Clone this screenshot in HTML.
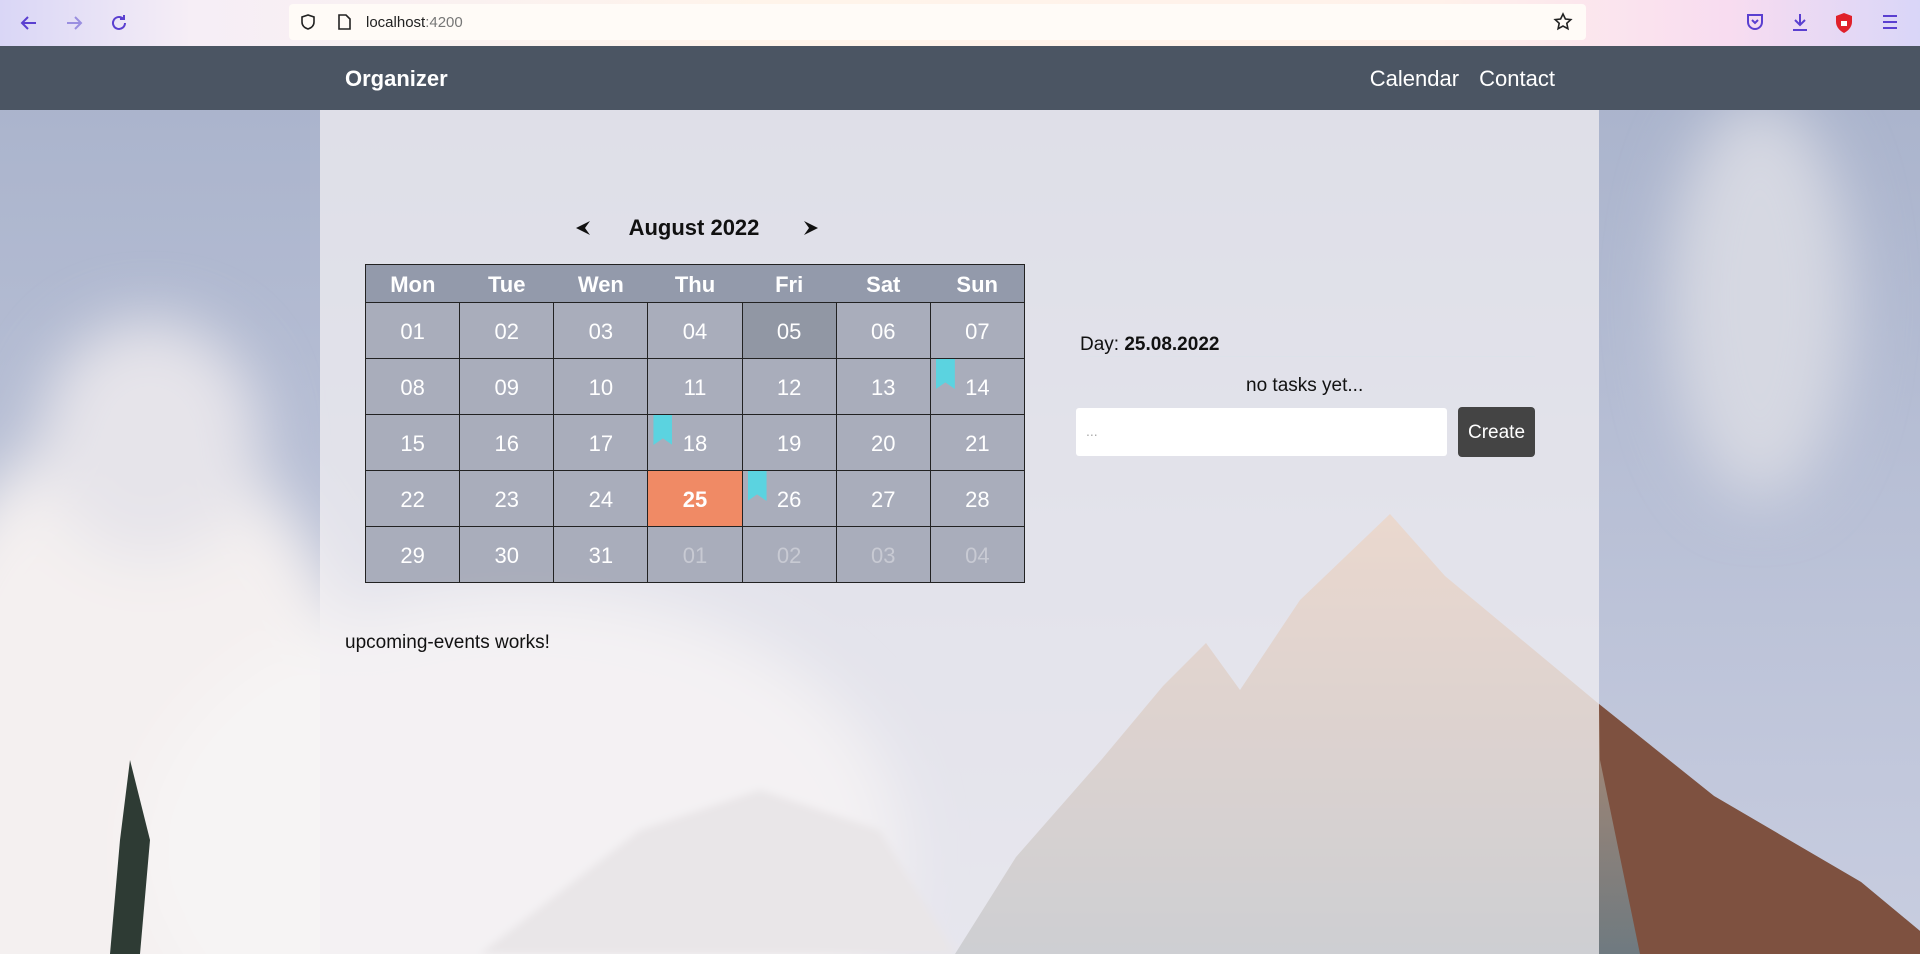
<!DOCTYPE html>
<html><head><meta charset="utf-8"><style>
*{margin:0;padding:0;box-sizing:border-box}
html,body{width:1920px;height:954px;overflow:hidden}
body{font-family:"Liberation Sans",sans-serif;position:relative;background:#b4bdd2}
#bg{position:absolute;left:0;top:0}
.chrome{position:absolute;left:0;top:0;width:1920px;height:46px;background:linear-gradient(90deg,#d9d6f6 0%,#f6eef6 10%,#fff4ea 40%,#fff1ea 75%,#f8dcf0 90%,#d9d6f8 100%);overflow:hidden}
.url{position:absolute;left:289px;top:4px;width:1297px;height:36px;background:#fffbf7;border-radius:4px}
.url span{position:absolute;left:77px;top:10px;font-size:15px;color:#222}
.url span i{font-style:normal;color:#777}
.nav{position:absolute;left:0;top:46px;width:1920px;height:64px;background:#4b5563}
.nav .brand{position:absolute;left:345px;top:20px;color:#fff;font-weight:bold;font-size:22px}
.nav .links{position:absolute;right:365px;top:20px;color:#fff;font-size:22px;word-spacing:14px}
.col{position:absolute;left:320px;top:110px;width:1279px;height:844px;background:rgba(242,240,243,0.72)}
.title{position:absolute;left:594px;top:215px;width:200px;text-align:center;font-weight:bold;font-size:22px;color:#111}
table{position:absolute;left:365px;top:264px;width:660px;border-collapse:collapse;border:1.5px solid #222}
th{height:38px;background:rgba(140,148,165,0.92);color:#fff;font-size:22px;font-weight:bold;border-bottom:1.5px solid #222;padding-top:2px}
td{height:56px;width:94px;background:rgba(160,165,180,0.88);color:#fff;font-size:22px;text-align:center;border:1.5px solid #222;position:relative;padding-top:3px}
td.o{color:#c8cad3}
td.t{background:#f08a65;font-weight:bold}
td.d{background:rgba(140,146,160,0.95)}
.bm{position:absolute;left:5px;top:0;width:19px;height:30px;background:#5bd3e0;clip-path:polygon(0 0,100% 0,100% 100%,50% 78%,0 100%)}
.day{position:absolute;left:1080px;top:334px;font-size:19px;color:#111}
.line{position:absolute;left:1080px;top:356px;width:455px;height:1px;background:#dde2ea}
.nt{position:absolute;left:1246px;top:375px;font-size:19px;color:#111}
.inp{position:absolute;left:1076px;top:408px;width:371px;height:48px;background:#fff;border-radius:3px;color:#aaa;font-size:14px;padding:15px 10px}
.btn{position:absolute;left:1458px;top:407px;width:77px;height:50px;background:#444;border-radius:4px;color:#fff;font-size:19px;text-align:center;line-height:52px}
.up{position:absolute;left:345px;top:632px;font-size:19px;color:#111}
.ic{position:absolute;top:12px}
</style></head><body>
<svg id="bg" width="1920" height="954">
<defs>
<linearGradient id="sky" x1="0" y1="0" x2="0" y2="1"><stop offset="0" stop-color="#a7b1ca"/><stop offset="1" stop-color="#c8cde0"/></linearGradient>
<linearGradient id="mt" x1="0" y1="0" x2="0" y2="1"><stop offset="0" stop-color="#d49a70"/><stop offset="0.45" stop-color="#a88874"/><stop offset="1" stop-color="#6f7a80"/></linearGradient>
<filter id="bl"><feGaussianBlur stdDeviation="30"/></filter>
<filter id="bl2"><feGaussianBlur stdDeviation="4"/></filter>
</defs>
<rect width="1920" height="954" fill="url(#sky)"/>
<g filter="url(#bl)">
<ellipse cx="130" cy="800" rx="240" ry="380" fill="#f4f0f0"/>
<ellipse cx="520" cy="850" rx="380" ry="260" fill="#f6f4f4"/>
<ellipse cx="150" cy="440" rx="110" ry="120" fill="#e6e4ea"/>
<ellipse cx="1760" cy="300" rx="90" ry="200" fill="#d6d8e2"/>
</g>
<polygon points="480,954 640,830 760,790 880,830 955,954" fill="#d0cccc" filter="url(#bl2)"/>
<polygon points="955,954 1016,857 1102,759 1163,686 1206,643 1240,690 1300,600 1390,514 1445,576 1599,704 1714,796 1861,882 1920,931 1920,954" fill="url(#mt)"/>
<polygon points="1599,704 1714,796 1861,882 1920,931 1920,954 1640,954 1600,760" fill="#7e5140"/>
<polygon points="130,760 150,840 140,954 110,954 120,840" fill="#2e3b34"/>
</svg>
<div class="col"></div>
<div class="chrome">
<svg class="ic" style="left:18px" width="22" height="22" fill="none" stroke="#5a3fd0" stroke-width="2"><path d="M18 11H4M10 5 4 11l6 6"/></svg>
<svg class="ic" style="left:63px" width="22" height="22" fill="none" stroke="#9a8fe0" stroke-width="2"><path d="M4 11h14M12 5l6 6-6 6"/></svg>
<svg class="ic" style="left:108px" width="22" height="22" fill="none" stroke="#5a3fd0" stroke-width="2"><path d="M17 11a6 6 0 1 1-2-4.5M16 3v4h-4"/></svg>
<div class="url"><svg style="position:absolute;left:10px;top:9px" width="18" height="18" fill="none" stroke="#222" stroke-width="1.6"><path d="M9 2 3 4v5c0 4 3 6 6 7 3-1 6-3 6-7V4z"/></svg><svg style="position:absolute;left:47px;top:9px" width="16" height="18" fill="none" stroke="#222" stroke-width="1.6"><path d="M3 2h7l4 4v10H3z"/></svg><span>localhost<i>:4200</i></span><svg style="position:absolute;left:1264px;top:8px" width="20" height="20" fill="none" stroke="#222" stroke-width="1.6"><path d="M10 2l2.4 5 5.4.6-4 3.7 1.1 5.4L10 14l-4.9 2.7 1.1-5.4-4-3.7 5.4-.6z"/></svg></div>
<svg class="ic" style="left:1745px" width="20" height="20" fill="none" stroke="#5a3fd0" stroke-width="2"><path d="M3 3h14v7a7 7 0 0 1-14 0z"/><path d="M7 8l3 3 3-3"/></svg>
<svg class="ic" style="left:1790px" width="20" height="20" fill="none" stroke="#5a3fd0" stroke-width="2"><path d="M10 2v11M5 8l5 5 5-5M3 18h14"/></svg>
<svg class="ic" style="left:1834px" width="20" height="22"><path d="M10 1 2 4v6c0 5 4 9 8 11 4-2 8-6 8-11V4z" fill="#e0202a"/><rect x="7" y="9" width="6" height="5" fill="#fff"/></svg>
<svg class="ic" style="left:1880px" width="20" height="20" stroke="#5a3fd0" stroke-width="2"><path d="M3 4h14M3 10h14M3 16h14"/></svg>
</div>
<div class="nav"><div class="brand">Organizer</div><div class="links">Calendar Contact</div></div>
<svg style="position:absolute;left:574px;top:219px" width="18" height="18"><polygon points="16,2 2,9 16,16 11,9" fill="#111"/></svg>
<svg style="position:absolute;left:802px;top:219px" width="18" height="18"><polygon points="2,2 16,9 2,16 7,9" fill="#111"/></svg>
<div class="title">August 2022</div>
<table>
<tr><th>Mon</th><th>Tue</th><th>Wen</th><th>Thu</th><th>Fri</th><th>Sat</th><th>Sun</th></tr>
<tr><td>01</td><td>02</td><td>03</td><td>04</td><td class="d">05</td><td>06</td><td>07</td></tr>
<tr><td>08</td><td>09</td><td>10</td><td>11</td><td>12</td><td>13</td><td><div class="bm"></div>14</td></tr>
<tr><td>15</td><td>16</td><td>17</td><td><div class="bm"></div>18</td><td>19</td><td>20</td><td>21</td></tr>
<tr><td>22</td><td>23</td><td>24</td><td class="t">25</td><td><div class="bm"></div>26</td><td>27</td><td>28</td></tr>
<tr><td>29</td><td>30</td><td>31</td><td class="o">01</td><td class="o">02</td><td class="o">03</td><td class="o">04</td></tr>
</table>
<div class="day">Day: <b>25.08.2022</b></div>
<div class="line"></div>
<div class="nt">no tasks yet...</div>
<div class="inp">...</div>
<div class="btn">Create</div>
<div class="up">upcoming-events works!</div>
</body></html>
